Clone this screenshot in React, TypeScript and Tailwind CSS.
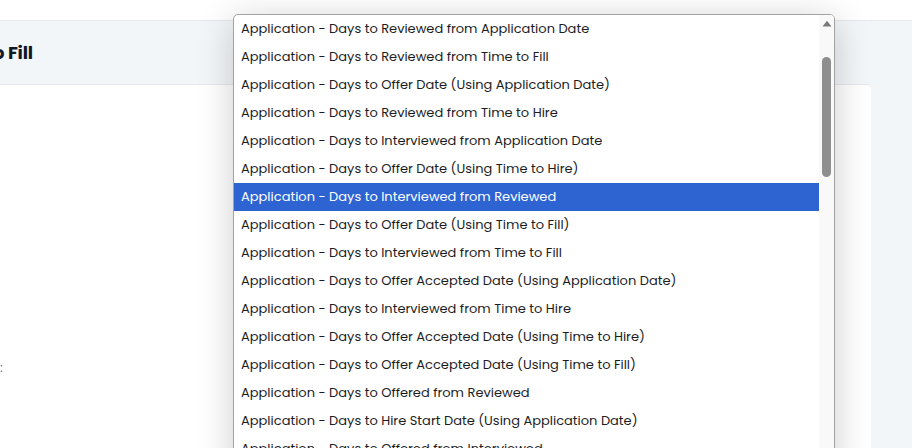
import React from "react";

const items = [
  "Application - Days to Reviewed from Application Date",
  "Application - Days to Reviewed from Time to Fill",
  "Application - Days to Offer Date (Using Application Date)",
  "Application - Days to Reviewed from Time to Hire",
  "Application - Days to Interviewed from Application Date",
  "Application - Days to Offer Date (Using Time to Hire)",
  "Application - Days to Interviewed from Reviewed",
  "Application - Days to Offer Date (Using Time to Fill)",
  "Application - Days to Interviewed from Time to Fill",
  "Application - Days to Offer Accepted Date (Using Application Date)",
  "Application - Days to Interviewed from Time to Hire",
  "Application - Days to Offer Accepted Date (Using Time to Hire)",
  "Application - Days to Offer Accepted Date (Using Time to Fill)",
  "Application - Days to Offered from Reviewed",
  "Application - Days to Hire Start Date (Using Application Date)",
  "Application - Days to Offered from Interviewed",
  "Application - Days to Offered from Time to Fill",
];

export default function App() {
  return (
    <div
      className="relative w-[912px] h-[448px] overflow-hidden bg-white"
      style={{ fontFamily: "Poppins, 'Open Sans', sans-serif" }}
    >
      <div className="h-[20px] bg-white" />
      <div className="h-[428px] bg-[#f3f6f9] border-t border-[#e5e8ec] flex flex-col">
        <div className="h-[63px] flex items-center">
          <div className="ml-[-7px] text-[18px] font-bold text-[#111827] tracking-[-0.2px]">
            o Fill
          </div>
        </div>
        <div className="flex-1 flex">
          <div className="w-[871px] bg-white border-t border-[#e5e8ec] rounded-tr-[4px] flex flex-col">
            <div className="h-[276px]" />
            <div className="text-[13px] text-[#5a6b8c] leading-none">:</div>
          </div>
        </div>
      </div>

      <div className="absolute left-[233px] top-[14px] w-[602px] h-[460px] bg-white border border-[#a3a3a3] rounded-t-[5px] shadow-[0_6px_36px_rgba(0,0,0,0.2)] flex overflow-hidden">
        <div className="flex-1 flex flex-col">
          {items.map((t, i) => (
            <div
              key={i}
              className={
                "h-[28px] shrink-0 flex items-center pl-[7px] text-[13px] whitespace-nowrap " +
                (i === 6 ? "bg-[#2d64d2] text-white" : "text-[#1d1d1f]")
              }
            >
              {t}
            </div>
          ))}
        </div>
        <div className="w-[15px] bg-[#f9f9f9] flex flex-col items-center">
          <svg width="10" height="7" viewBox="0 0 10 7" className="mt-[5px]">
            <path d="M0.5 6.5 L5 0.8 L9.5 6.5 Z" fill="#7a7a7a" />
          </svg>
          <div className="mt-[30px] w-[9px] h-[120px] rounded-full bg-[#8e8e8e]" />
        </div>
      </div>
    </div>
  );
}
